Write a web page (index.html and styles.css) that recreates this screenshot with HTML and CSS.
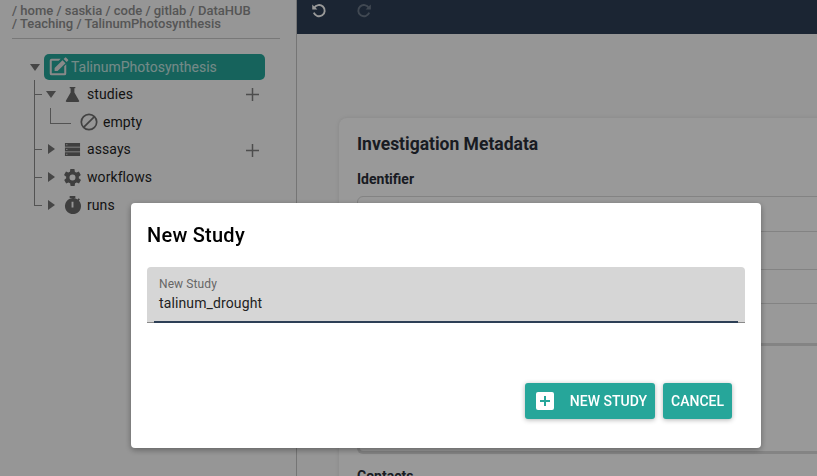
FILE: index.html
```html
<!DOCTYPE html>
<html lang="en">
<head>
<meta charset="utf-8">
<title>New Study</title>
<link rel="stylesheet" href="styles.css">
</head>
<body>
<div class="app">
  <aside class="sidebar">
    <div class="crumbs">/ home / saskia / code / gitlab / DataHUB<br>/ Teaching / TalinumPhotosynthesis</div>
    <div class="tree">
      <div class="row root">
        <svg class="caret caret-root" viewBox="0 0 10 7"><path d="M0 0h10L5 7z"/></svg>
        <div class="root-chip">
          <svg class="root-icon" viewBox="0 0 24 24"><path d="M3 5a2 2 0 0 1 2-2h10l-2.200 2.200H5.200v13.600h13.600v-7.600L21 9v10a2 2 0 0 1-2 2H5a2 2 0 0 1-2-2z"/><path d="M19.600 1.800a1 1 0 0 1 1.400 0l1.900 1.900a1 1 0 0 1 0 1.400l-1.500 1.500-3.300-3.300zM16.900 4.500l3.300 3.300-8.600 8.600H8.300v-3.300z"/></svg>
          <span>TalinumPhotosynthesis</span>
        </div>
      </div>
      <div class="branch">
        <div class="row node">
          <svg class="caret caret-down" viewBox="0 0 10 7"><path d="M0 0h10L5 7z"/></svg>
          <svg class="icon" viewBox="1 0 16 18"><path d="M6 1h6v1.500h-1V7l5 8.500a1 1 0 0 1-.9 1.500H2.900a1 1 0 0 1-.9-1.500L7 7V2.500H6z"/></svg>
          <span class="label">studies</span>
          <svg class="plus" viewBox="0 0 14 14"><path d="M6.200 0h1.600v6.200H14v1.600H7.800V14H6.200V7.800H0V6.200h6.200z"/></svg>
        </div>
        <div class="row child short">
          <svg class="ban" viewBox="0 0 18 18"><circle cx="9" cy="9" r="7.700"/><path d="M3.800 14.200 14.200 3.800"/></svg>
          <span class="label">empty</span>
        </div>
        <div class="row node short">
          <svg class="caret caret-right" viewBox="0 0 7 10"><path d="M0 0l7 5-7 5z"/></svg>
          <svg class="icon" viewBox="0 0 18 16"><path fill-rule="evenodd" d="M1 1h16v4H1zM2.500 2.500v1h1v-1zM1 6h16v4H1zM2.500 7.500v1h1v-1zM1 11h16v4H1zM2.500 12.500v1h1v-1z"/></svg>
          <span class="label">assays</span>
          <svg class="plus" viewBox="0 0 14 14"><path d="M6.200 0h1.600v6.200H14v1.600H7.800V14H6.200V7.800H0V6.200h6.200z"/></svg>
        </div>
        <div class="row node">
          <svg class="caret caret-right" viewBox="0 0 7 10"><path d="M0 0l7 5-7 5z"/></svg>
          <svg class="icon" viewBox="2 2 20 20"><path fill-rule="evenodd" d="M19.400 13c0-.3.100-.7.100-1s0-.7-.1-1l2.100-1.600c.2-.2.200-.4.100-.6l-2-3.500c-.1-.2-.4-.3-.6-.2l-2.500 1c-.5-.4-1.100-.7-1.700-1l-.4-2.600c0-.3-.2-.5-.5-.5h-4c-.3 0-.5.200-.5.400l-.4 2.700c-.6.200-1.200.6-1.700 1l-2.500-1c-.2-.1-.5 0-.6.200l-2 3.500c-.1.200-.1.400.1.600L4.600 11c0 .3-.1.700-.1 1s0 .7.100 1l-2.100 1.600c-.2.200-.2.400-.1.600l2 3.500c.1.200.4.300.6.200l2.500-1c.5.400 1.100.7 1.700 1l.4 2.600c0 .3.200.5.500.5h4c.3 0 .5-.2.500-.4l.4-2.700c.6-.2 1.200-.6 1.700-1l2.500 1c.2.100.5 0 .6-.2l2-3.500c.1-.2.100-.4-.1-.6zM12 15.500a3.500 3.500 0 1 1 0-7 3.500 3.500 0 0 1 0 7z"/></svg>
          <span class="label">workflows</span>
        </div>
        <div class="row node">
          <svg class="caret caret-right" viewBox="0 0 7 10"><path d="M0 0l7 5-7 5z"/></svg>
          <svg class="icon icon-timer" viewBox="0 0 18 20"><path fill-rule="evenodd" d="M6 0h6v2H6zM14.300 3.600l1.300-1.300 1.300 1.300-1.200 1.200A8.500 8.500 0 1 1 14.300 3.600zM8 6v6h2V6z"/></svg>
          <span class="label">runs</span>
        </div>
      </div>
    </div>
  </aside>
  <main class="main">
    <div class="toolbar">
      <svg class="tool" viewBox="0 0 16 16"><path class="tool-arc" d="M3.400 5.200A6 6 0 1 1 3 10.300"/><path class="tool-head" d="M1.300 1.500 6.800 7H1.300z"/></svg>
      <svg class="tool tool-off" viewBox="0 0 16 16"><path class="tool-arc" d="M12.600 5.200A6 6 0 1 0 13 10.300"/><path class="tool-head" d="M14.700 1.500 9.200 7h5.500z"/></svg>
    </div>
    <div class="content">
      <section class="card">
        <h2 class="card-title">Investigation Metadata</h2>
        <h3 class="field-label">Identifier</h3>
        <div class="box box-id"></div>
        <div class="line line-a"></div>
        <div class="line line-b"></div>
        <div class="line line-c"></div>
        <div class="box box-text"></div>
        <h3 class="field-label contacts">Contacts</h3>
      </section>
    </div>
  </main>
</div>

<div class="backdrop"></div>
<div class="dialog">
  <h1 class="dialog-title">New Study</h1>
  <div class="input">
    <div class="input-label">New Study</div>
    <div class="input-value">talinum_drought</div>
  </div>
  <div class="actions">
    <button class="btn btn-icon" type="button">
      <svg class="plus-box" viewBox="0 0 18 18"><path fill-rule="evenodd" d="M2 0h14a2 2 0 0 1 2 2v14a2 2 0 0 1-2 2H2a2 2 0 0 1-2-2V2a2 2 0 0 1 2-2zM8 4v4H4v2h4v4h2v-4h4V8h-4V4z"/></svg>
      <span>New Study</span>
    </button>
    <button class="btn" type="button">Cancel</button>
  </div>
</div>
</body>
</html>
```
FILE: styles.css
```css
* { box-sizing: border-box; }
html, body { margin: 0; height: 100%; overflow: hidden; }
body { font-family: Roboto, "Liberation Sans", sans-serif; font-size: 14px; color: #1d1d1d; background: #fafafa; }

.app { display: flex; height: 476px; overflow: hidden; }

/* sidebar */
.sidebar { flex: 0 0 297px; border-right: 1px solid #c4c4c4; padding: 3px 16px 0 12px; }
.crumbs { font-size: 13px; font-weight: 500; line-height: 13px; color: #8e8e8e; height: 36px; padding-top: 1px; border-bottom: 1px solid #c8c8c8; margin-bottom: 15px; width: 268px; }
.tree { position: relative; }
.row { display: flex; align-items: center; height: 28px; position: relative; }
.short { height: 27.500px; }
.root { height: 26px; }
.caret { fill: #757575; flex: none; }
.caret-root { width: 10px; height: 7px; margin-left: 18px; margin-right: 4px; }
.root-chip { flex: none; width: 221px; height: 26px; display: flex; align-items: center; background: #26a69a; border-radius: 5px; padding-left: 3px; color: #fff; }
.root-chip span { opacity: .72; margin-left: 2px; }
.root-icon { width: 22px; height: 22px; fill: #e4e4e4; flex: none; }

.branch { position: relative; margin-left: 22px; }
.branch::before { content: ""; position: absolute; left: 0; top: 0; height: 125px; width: 1px; background: #8a8a8a; }
.node::before { content: ""; position: absolute; left: 0; top: 50%; width: 8px; height: 1px; background: #8a8a8a; }
.caret-down { width: 10px; height: 7px; margin-left: 12px; margin-right: 8px; }
.caret-right { width: 7px; height: 10px; margin-left: 14px; margin-right: 9px; }
.icon { width: 17px; height: 17px; fill: #6a6a6a; flex: none; margin-right: 6px; }
.icon-timer { height: 19px; }
.label { letter-spacing: .08px; color: #1f1f1f; }
.plus { position: absolute; left: 212px; top: 8px; width: 13px; height: 13px; fill: #808080; }
.child { padding-left: 46px; }
.child::before { content: ""; position: absolute; left: 16px; top: 0; width: 20px; height: 15px; border-left: 1px solid #8a8a8a; border-bottom: 1px solid #8a8a8a; }
.ban { width: 18px; height: 18px; fill: none; stroke: #6e6e6e; stroke-width: 1.700; margin-right: 5px; flex: none; }

/* main */
.main { flex: 1; min-width: 0; display: flex; flex-direction: column; }
.toolbar { flex: 0 0 34px; background: #2d3f56; display: flex; align-items: flex-start; gap: 31px; padding: 3px 0 0 14px; }
.tool { width: 15px; height: 15px; }
.tool-arc { fill: none; stroke: #fff; stroke-width: 2; }
.tool-head { fill: #fff; }
.tool-off { opacity: .3; }
.content { flex: 1; padding: 84px 0 0 42px; overflow: hidden; }
.card { width: 700px; height: 500px; background: #fff; border-radius: 8px; box-shadow: 0 0 4px rgba(0,0,0,.1); padding: 15px 18px 0; }
.card-title { margin: 0 0 16px; font-size: 17.500px; line-height: 22px; font-weight: 700; color: #2b2f3a; }
.field-label { margin: 0 0 9px; font-size: 14px; line-height: 16px; font-weight: 700; color: #2b2f3a; }
.box { border: 1px solid #dadada; border-radius: 6px 6px 0 0; }
.box-id { height: 36px; }
.line { height: 1px; background: #dadada; }
.line-a { margin-top: 37px; }
.line-b { margin-top: 33px; }
.line-c { margin-top: 39px; height: 3px; background: #dcdcdc; }
.box-text { height: 108px; border: 0; border-bottom: 3px solid #dcdcdc; border-left: 3px solid #dcdcdc; border-radius: 0 0 6px 6px; }
.contacts { margin-top: 14px; }

/* modal */
.backdrop { position: fixed; inset: 0; background: rgba(0,0,0,.4); }
.dialog { position: fixed; left: 131px; top: 203px; width: 630px; height: 245px; background: #fff; border-radius: 4px; box-shadow: 0 2px 6px rgba(0,0,0,.35); padding: 0 16px; display: flex; flex-direction: column; }
.dialog-title { margin: 20px 0 20px; font-size: 20px; line-height: 24px; font-weight: 500; letter-spacing: .25px; color: #000; }
.input { height: 56px; background: #d6d6d6; border-radius: 4px 4px 0 0; padding: 10px 12px 0; position: relative; border-bottom: 1px solid #8a8a8a; }
.input::after { content: ""; position: absolute; left: 7px; right: 7px; bottom: -1px; height: 2px; background: #2d3f56; }
.input-label { font-size: 12px; line-height: 14px; color: #666; letter-spacing: .1px; }
.input-value { font-size: 14px; line-height: 20px; margin-top: 2px; color: #222; letter-spacing: .12px; }
.actions { display: flex; justify-content: flex-end; gap: 8px; margin-top: 60px; padding-right: 13px; }
.btn { height: 36px; border: 0; border-radius: 3px; background: #26a69a; color: #fff; font: 500 14px/16px Roboto, "Liberation Sans", sans-serif; text-transform: uppercase; padding: 0 8px; display: flex; align-items: center; box-shadow: 0 1px 5px rgba(0,0,0,.3); }
.btn-icon { padding-left: 11px; }
.plus-box { width: 18px; height: 18px; fill: #fff; margin-right: 16px; }
```
